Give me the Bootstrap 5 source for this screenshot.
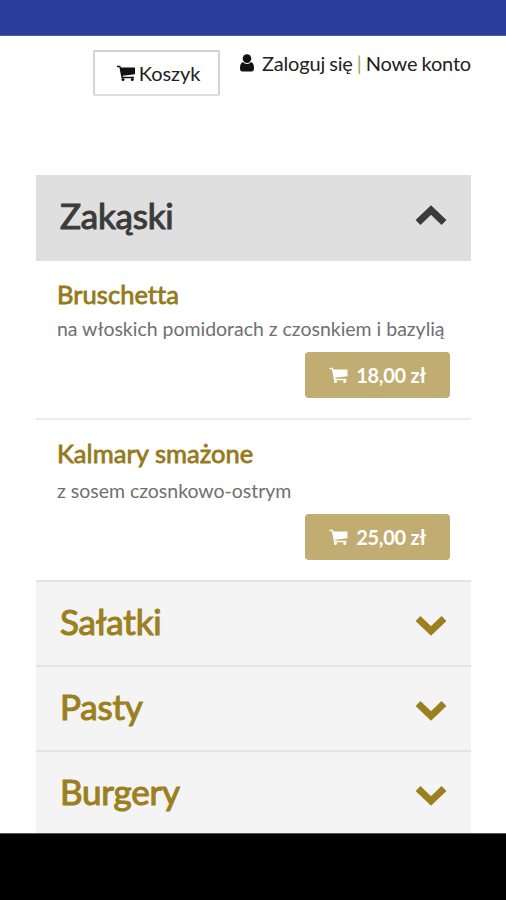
<!DOCTYPE html>
<html lang="pl">
<head>
<meta charset="utf-8">
<meta name="viewport" content="width=device-width, initial-scale=1">
<title>Menu</title>
<link href="https://cdn.jsdelivr.net/npm/bootstrap@5.3.0/dist/css/bootstrap.min.css" rel="stylesheet">
<style>
body{font-family:Lato,"Liberation Sans",sans-serif;color:#222;height:900px;overflow:hidden}
.status-strip{height:36px;background:#2c3e9c;border-bottom:1px solid #4a59a8}
.top-tools{height:139px;padding:14px 35px 0 93px}
.btn-basket{width:127px;height:46px;border:2px solid #d4d4d4;border-bottom-color:#dedede;border-radius:2px;font-size:20px;padding:0 0 0 4px;color:#222;line-height:1}
.btn-basket span{letter-spacing:-.1px}
.account-links{font-size:20px;line-height:26px;white-space:nowrap;letter-spacing:-.18px;word-spacing:-.8px}
.account-links a{color:#222}
.split{color:#a5a860}
.menu-list{margin:0 35px 0 36px;height:658px;overflow:hidden}
.cat-head{height:85px;padding:0 24px;background:#f4f4f4;color:#9c8020;border-top:2px solid #e3e3e3}
.cat-head.open{height:86px;background:#dfdfdf;color:#3b3b3b;border-top-color:#dfdfdf}
.cat-head h2{font-size:35px;line-height:42px;font-weight:400;letter-spacing:-.2px;padding-bottom:6px;-webkit-text-stroke:1.1px currentColor}
.cat-head.open h2{padding-bottom:8px}
.cat-head svg{margin-top:3px}
.cat-head.open svg{margin-top:-7px}
.dish{height:157px;padding:18px 21px 0}
.dish + .dish{height:162px;border-top:2px solid #ececec}
.dish h3{font-size:25.5px;line-height:30px;font-weight:400;letter-spacing:.05px;color:#96791a;-webkit-text-stroke:.8px currentColor}
.dish p{font-size:19.5px;line-height:24px;color:#707070;white-space:nowrap;margin-top:8px;letter-spacing:-.02px}
.dish + .dish p{margin-top:11px}
.btn-price{width:145px;height:46px;background:#c1ac72;color:#fff;border:0;border-radius:4px;font-size:20px;padding:0;font-weight:700;line-height:1;margin-top:11px;letter-spacing:-.25px}
.nav-strip{height:67px;background:#000;border-top:1px solid #555}
</style>
</head>
<body class="bg-white">
<svg class="d-none">
  <symbol id="cart" viewBox="0 0 18 16"><path d="M0 .8h3.300l.6 1.700H18v6.800L5.600 10.700l.2 1.100H17v1.500H4.500L2.400 2.300H0z"/><circle cx="6" cy="14.400" r="1.500"/><circle cx="15.300" cy="14.400" r="1.500"/></symbol>
  <symbol id="chev" viewBox="0 0 32 22"><path d="M3 4.500L16 17 29 4.500" fill="none" stroke="currentColor" stroke-width="7"/></symbol>
</svg>
<div class="status-strip"></div>
<header class="top-tools d-flex justify-content-between align-items-start">
  <button class="btn btn-basket bg-white d-flex align-items-center justify-content-center" id="basket"><svg width="18" height="16" fill="#111" class="me-1"><use href="#cart"/></svg><span>Koszyk</span></button>
  <div class="account-links d-flex align-items-center">
    <svg width="14" height="18" viewBox="0 0 14 18" fill="#111" class="me-2"><circle cx="7" cy="4.600" r="4.300"/><path d="M3 8c2 2.600 6 2.600 8 0 2 .5 3 2.500 3 6.500 0 2-1 3-2.500 3h-9C1 17.500 0 16.500 0 14.500 0 10.500 1 8.500 3 8z"/></svg>
    <span><a href="#" class="text-decoration-none">Zaloguj się</a> <span class="split">|</span> <a href="#" class="text-decoration-none">Nowe konto</a></span>
  </div>
</header>
<main class="menu-list">
  <div class="cat-head open d-flex justify-content-between align-items-center"><h2 class="mb-0">Zakąski</h2><svg width="32" height="22"><use href="#chev" transform="rotate(180 16 11)"/></svg></div>
  <article class="dish d-flex flex-column">
    <h3 class="mb-0">Bruschetta</h3>
    <p class="mb-0">na włoskich pomidorach z czosnkiem i bazylią</p>
    <button class="btn btn-price d-flex align-items-center justify-content-center align-self-end"><svg width="19" height="16" fill="#fff" class="me-2"><use href="#cart"/></svg><span>18,00 zł</span></button>
  </article>
  <article class="dish d-flex flex-column">
    <h3 class="mb-0">Kalmary smażone</h3>
    <p class="mb-0">z sosem czosnkowo-ostrym</p>
    <button class="btn btn-price d-flex align-items-center justify-content-center align-self-end"><svg width="19" height="16" fill="#fff" class="me-2"><use href="#cart"/></svg><span>25,00 zł</span></button>
  </article>
  <div class="cat-head d-flex justify-content-between align-items-center"><h2 class="mb-0">Sałatki</h2><svg width="32" height="22"><use href="#chev"/></svg></div>
  <div class="cat-head d-flex justify-content-between align-items-center"><h2 class="mb-0">Pasty</h2><svg width="32" height="22"><use href="#chev"/></svg></div>
  <div class="cat-head d-flex justify-content-between align-items-center"><h2 class="mb-0">Burgery</h2><svg width="32" height="22"><use href="#chev"/></svg></div>
</main>
<footer class="nav-strip"></footer>
<script src="https://cdn.jsdelivr.net/npm/bootstrap@5.3.0/dist/js/bootstrap.bundle.min.js"></script>
</body>
</html>
